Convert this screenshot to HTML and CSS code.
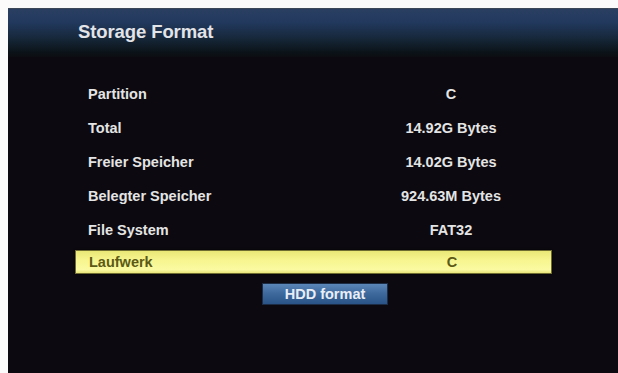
FILE: index.html
```html
<!DOCTYPE html>
<html lang="de">
<head>
    <meta charset="UTF-8">
    <title>Storage Format</title>
    <link rel="stylesheet" href="styles.css">
</head>
<body>
    <div class="screen">
        <div class="header">
            <h1>Storage Format</h1>
        </div>

        <div class="info-list">
            <div class="row"><span class="label">Partition</span><span class="value">C</span></div>
            <div class="row"><span class="label">Total</span><span class="value">14.92G Bytes</span></div>
            <div class="row"><span class="label">Freier Speicher</span><span class="value">14.02G Bytes</span></div>
            <div class="row"><span class="label">Belegter Speicher</span><span class="value">924.63M Bytes</span></div>
            <div class="row"><span class="label">File System</span><span class="value">FAT32</span></div>
            <div class="row selected"><span class="label">Laufwerk</span><span class="value">C</span></div>
            <button class="format-btn">HDD format</button>
        </div>
    </div>
</body>
</html>
```

FILE: styles.css
```css
* {
    margin: 0;
    padding: 0;
    box-sizing: border-box;
    font-family: "Liberation Sans", Arial, sans-serif;
}

body {
    background: #fbfbfb;
    height: 373px;
    overflow: hidden;
}

.screen {
    margin: 8px 0 0 8px;
    height: 365px;
    background: #0c0a10;
    color: #ececec;
}

.header {
    height: 49px;
    display: flex;
    align-items: center;
    padding-left: 70px;
    padding-bottom: 2px;
    border-top: 1px solid #3c4858;
    background: linear-gradient(to bottom, #2a3f62 0%, #22395e 28%, #162739 62%, #0b1318 90%, #0c0d12 100%);
}

.header h1 {
    font-size: 18.5px;
    font-weight: bold;
    color: #e2e4e8;
    letter-spacing: -0.1px;
}

.info-list {
    width: 477px;
    margin-left: 67px;
    padding-top: 20px;
}

.row {
    display: grid;
    grid-template-columns: 301px 150px 1fr;
    align-items: center;
    height: 34px;
    font-size: 14.5px;
    font-weight: bold;
    color: #e4e4e4;
}

.row .label {
    padding-left: 13px;
}

.row .value {
    text-align: center;
}

.row.selected {
    height: 24px;
    margin-top: 3px;
    background: linear-gradient(to bottom, #e9e776 0%, #f6f58e 40%, #fbfaa2 85%, #e8e57a 100%);
    border: 1px solid #6e6c30;
    box-shadow: 0 0 2px #000;
    color: #5c5a16;
}

.format-btn {
    display: block;
    margin: 9px 0 0 187px;
    width: 126px;
    height: 22px;
    border: 1px solid #1b2c44;
    background: linear-gradient(to bottom, #5a86b8 0%, #3e6a9e 45%, #2a5488 100%);
    color: #e8eef6;
    font-size: 14.5px;
    font-weight: bold;
}
```
